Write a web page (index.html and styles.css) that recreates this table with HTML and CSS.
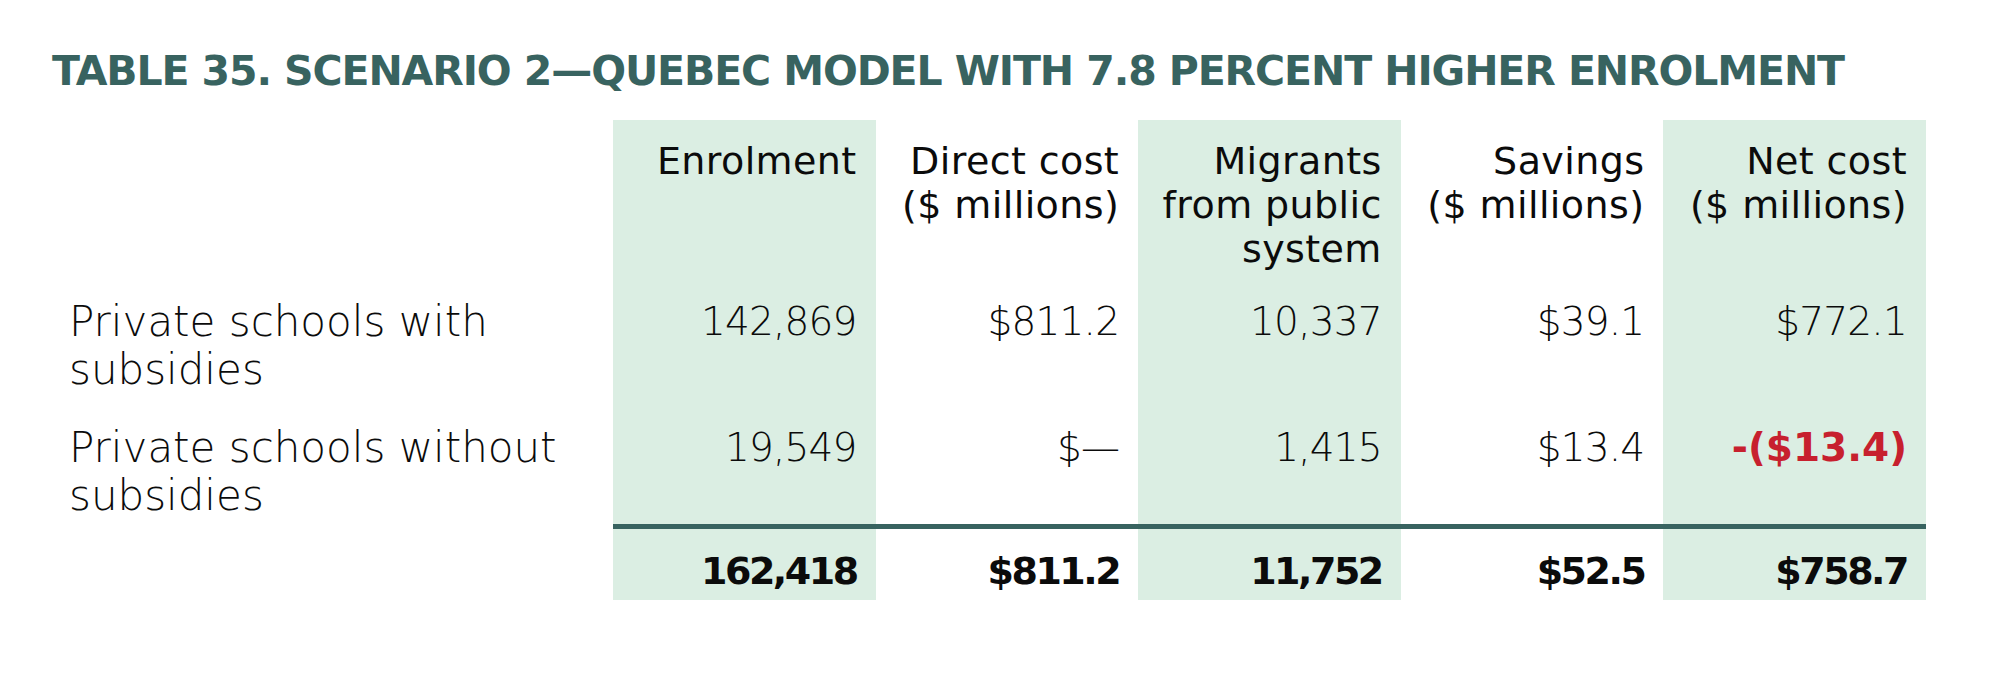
FILE: index.html
```html
<!DOCTYPE html>
<html lang="en">
<head>
<meta charset="utf-8">
<title>Table 35</title>
<link rel="stylesheet" href="styles.css">
</head>
<body>
<div class="page">
  <h1 class="title">TABLE 35. SCENARIO 2—QUEBEC MODEL WITH 7.8 PERCENT HIGHER ENROLMENT</h1>
  <div class="table">
    <div class="cell head label"></div>
    <div class="cell head shade">Enrolment</div>
    <div class="cell head">Direct cost<br>($ millions)</div>
    <div class="cell head shade">Migrants<br>from public<br>system</div>
    <div class="cell head">Savings<br>($ millions)</div>
    <div class="cell head shade">Net cost<br>($ millions)</div>

    <div class="cell row1 label">Private schools with subsidies</div>
    <div class="cell row1 num shade">142,869</div>
    <div class="cell row1 num">$811.2</div>
    <div class="cell row1 num shade">10,337</div>
    <div class="cell row1 num">$39.1</div>
    <div class="cell row1 num shade">$772.1</div>

    <div class="cell row2 label">Private schools without subsidies</div>
    <div class="cell row2 num shade">19,549</div>
    <div class="cell row2 num">$—</div>
    <div class="cell row2 num shade">1,415</div>
    <div class="cell row2 num">$13.4</div>
    <div class="cell row2 shade neg">-($13.4)</div>

    <div class="cell total label"></div>
    <div class="cell total ruled shade">162,418</div>
    <div class="cell total ruled">$811.2</div>
    <div class="cell total ruled shade">11,752</div>
    <div class="cell total ruled">$52.5</div>
    <div class="cell total ruled shade">$758.7</div>
  </div>
</div>
</body>
</html>
```

FILE: styles.css
```css
html, body {
  margin: 0;
  padding: 0;
  background: #ffffff;
}

.page {
  padding: 0 0 0 52px;
  font-family: "DejaVu Sans", "Liberation Sans", sans-serif;
  color: #0b0b0b;
}

.title {
  margin: 0;
  padding-top: 47px;
  font-size: 41px;
  line-height: 48px;
  font-weight: 700;
  color: #386360;
  letter-spacing: -1.1px;
  white-space: nowrap;
}

.table {
  display: grid;
  grid-template-columns: 561px repeat(5, 262.6px);
  margin-top: 25px;
}

.cell {
  text-align: right;
  padding-right: 19px;
  font-size: 39px;
  line-height: 47px;
  font-weight: 300;
}

.num {
  letter-spacing: -0.8px;
}

.shade {
  background: #dbeee3;
}

.label {
  text-align: left;
  padding-left: 17px;
  padding-right: 40px;
  font-size: 42px;
  line-height: 48px;
}

.head {
  font-size: 38px;
  line-height: 44px;
  font-weight: 400;
  letter-spacing: 0.4px;
  padding-top: 19px;
}

.row1 {
  padding-top: 27px;
}

.row2 {
  padding-top: 30px;
  padding-bottom: 4px;
}

.total {
  font-size: 38px;
  font-weight: 700;
  letter-spacing: -2.5px;
  padding-top: 19px;
  padding-bottom: 5px;
}

.ruled {
  border-top: 5px solid #386360;
}

.neg {
  color: #c7202e;
  font-weight: 700;
}
```
